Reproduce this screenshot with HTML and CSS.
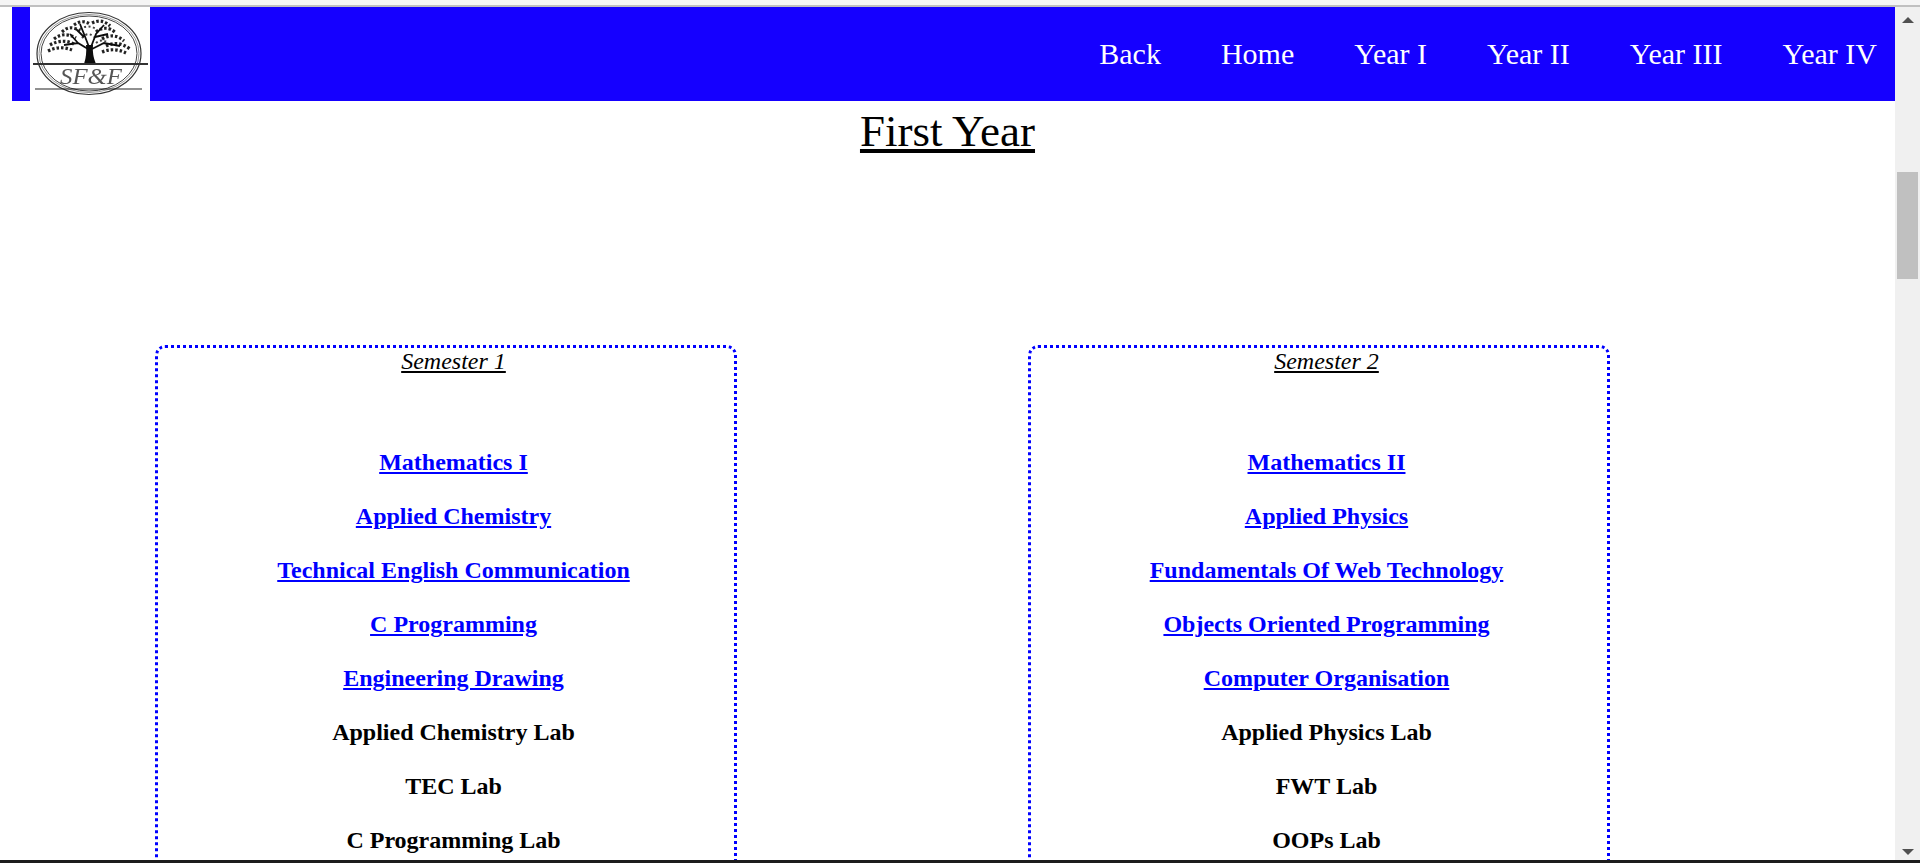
FILE: index.html
```html
<!DOCTYPE html>
<html lang="en">
<head>
  <meta charset="UTF-8">
  <title>First Year</title>
  <link rel="stylesheet" href="styles.css">
</head>

<body>
  <div class="top-strip"></div>
  <div class="window">
    <div class="page">
      <nav class="navbar">
        <div class="logo">
          <svg width="120" height="94" viewBox="0 0 120 94" aria-label="SF&amp;F logo">
            <defs>
              <filter id="soft"><feGaussianBlur stdDeviation="0.35"/></filter>
            </defs>
            <g filter="url(#soft)">
              <!-- rings -->
              <ellipse cx="59" cy="46.5" rx="52" ry="41" fill="none" stroke="#333" stroke-width="1.2"/>
              <ellipse cx="59" cy="46.5" rx="50" ry="39" fill="none" stroke="#999" stroke-width="1"/>
              <ellipse cx="59" cy="46.5" rx="48" ry="37.5" fill="none" stroke="#444" stroke-width="1"/>
              <!-- foliage -->
              <g fill="none" stroke="#222" stroke-width="3.2" stroke-dasharray="2.5 2">
                <path d="M18 44 Q30 38 42 43"/>
                <path d="M20 38 Q32 31 44 37"/>
                <path d="M24 32 Q34 24 46 31"/>
                <path d="M32 25 Q40 17 50 24"/>
                <path d="M44 18 Q52 12 60 17"/>
                <path d="M62 16 Q72 11 80 19"/>
                <path d="M66 25 Q76 17 86 26"/>
                <path d="M72 32 Q84 25 94 34"/>
                <path d="M76 39 Q88 33 100 42"/>
                <path d="M72 45 Q84 40 96 46"/>
              </g>
              <g fill="none" stroke="#444" stroke-width="2" stroke-dasharray="2 2.5">
                <path d="M52 31 Q58 24 64 30"/>
                <path d="M50 22 Q58 17 66 22"/>
                <path d="M66 36 Q72 31 78 36"/>
              </g>
              <!-- branches and trunk -->
              <path d="M58 42 L48 36 L34 38 M48 36 L40 27 M59 40 L54 27 L50 17 M54 30 L46 22 M61 40 L66 27 L74 18 M65 30 L78 27 M62 42 L74 36 L90 39" fill="none" stroke="#111" stroke-width="1.8"/>
              <path d="M54 57 Q57 48 56 38 L63 38 Q62 48 66 57 Z" fill="#111"/>
              <!-- ground and baseline -->
              <path d="M3 57 H118" stroke="#333" stroke-width="2"/>
              <path d="M5 82 H112" stroke="#222" stroke-width="1.2"/>
              <text x="30" y="77" class="logo-text" textLength="62" lengthAdjust="spacingAndGlyphs">SF&amp;F</text>
            </g>
          </svg>
        </div>
        <ul class="nav-links">
          <li>Back</li>
          <li>Home</li>
          <li>Year I</li>
          <li>Year II</li>
          <li>Year III</li>
          <li>Year IV</li>
        </ul>
      </nav>

      <h1 class="title">First Year</h1>

      <div class="semesters">
        <section class="semester">
          <h2 class="semester-title">Semester 1</h2>
          <ul class="subjects">
            <li><a href="#">Mathematics I</a></li>
            <li><a href="#">Applied Chemistry</a></li>
            <li><a href="#">Technical English Communication</a></li>
            <li><a href="#">C Programming</a></li>
            <li><a href="#">Engineering Drawing</a></li>
            <li>Applied Chemistry Lab</li>
            <li>TEC Lab</li>
            <li>C Programming Lab</li>
          </ul>
        </section>
        <section class="semester">
          <h2 class="semester-title">Semester 2</h2>
          <ul class="subjects">
            <li><a href="#">Mathematics II</a></li>
            <li><a href="#">Applied Physics</a></li>
            <li><a href="#">Fundamentals Of Web Technology</a></li>
            <li><a href="#">Objects Oriented Programming</a></li>
            <li><a href="#">Computer Organisation</a></li>
            <li>Applied Physics Lab</li>
            <li>FWT Lab</li>
            <li>OOPs Lab</li>
          </ul>
        </section>
      </div>
    </div>

    <div class="scrollbar">
      <span class="arrow-up"></span>
      <div class="track"><div class="thumb"></div></div>
      <span class="arrow-down"></span>
    </div>
  </div>
  <div class="bottom-bar"></div>
</body>

</html>
```

FILE: styles.css
```css
* {
  margin: 0;
  padding: 0;
  box-sizing: border-box;
}

html,
body {
  height: 100%;
  overflow: hidden;
}

body {
  display: flex;
  flex-direction: column;
  font-family: "Liberation Serif", "Times New Roman", serif;
  background: #ffffff;
  color: #000000;
}

.top-strip {
  height: 7px;
  flex-shrink: 0;
  background: #f5f5f5;
  border-bottom: 2px solid #c0c0c0;
}

.bottom-bar {
  height: 3px;
  flex-shrink: 0;
  background: #1c1c1c;
}

.window {
  flex: 1;
  display: flex;
  min-height: 0;
}

.page {
  flex: 1;
  min-width: 0;
  overflow: hidden;
}

.navbar {
  display: flex;
  align-items: center;
  justify-content: space-between;
  height: 94px;
  margin-left: 12px;
  padding-left: 18px;
  background: #1500ff;
}

.logo {
  width: 120px;
  height: 94px;
  background: #ffffff;
}

.logo-text {
  font-family: "Liberation Serif", serif;
  font-style: italic;
  font-size: 23px;
  fill: #555;
}

.nav-links {
  display: flex;
  gap: 60px;
  padding-right: 18px;
  list-style: none;
  color: #ffffff;
  font-size: 30px;
}

.title {
  font-size: 45px;
  font-weight: 400;
  line-height: 60px;
  text-align: center;
  text-decoration: underline;
}

.semesters {
  display: flex;
  gap: 291px;
  margin-top: 184px;
  padding-left: 155px;
}

.semester {
  width: 582px;
  height: 600px;
  padding-left: 15px;
  border: 3px dotted #0000ff;
  border-radius: 10px;
  text-align: center;
}

.semester-title {
  font-size: 24px;
  font-style: italic;
  font-weight: 400;
  line-height: 27px;
  text-decoration: underline;
}

.subjects {
  display: flex;
  flex-direction: column;
  gap: 27px;
  margin-top: 74px;
  list-style: none;
  font-size: 24px;
  font-weight: 700;
  line-height: 27px;
}

.subjects a {
  color: #0000ff;
}

.scrollbar {
  width: 25px;
  flex-shrink: 0;
  display: flex;
  flex-direction: column;
  align-items: center;
  background: #f0f0f0;
}

.track {
  flex: 1;
  width: 100%;
}

.thumb {
  width: 21px;
  height: 107px;
  margin: 149px 2px 0;
  background: #c0c0c0;
}

.arrow-up,
.arrow-down {
  width: 0;
  height: 0;
  border-left: 6px solid transparent;
  border-right: 6px solid transparent;
}

.arrow-up {
  margin-top: 10px;
  border-bottom: 6px solid #505050;
}

.arrow-down {
  margin-bottom: 5px;
  border-top: 6px solid #505050;
}
```
